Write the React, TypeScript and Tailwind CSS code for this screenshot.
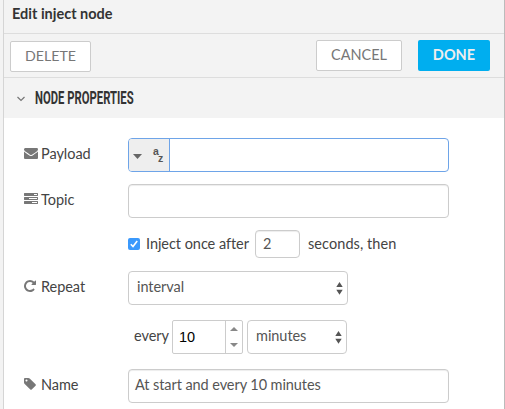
import type { ReactNode } from "react";

const ICONS = {
  envelope:
    "M1792 710v794q0 66-47 113t-113 47h-1472q-66 0-113-47t-47-113v-794q44 49 101 87 362 246 497 345 57 42 92.500 65.500t94.500 48 110 24.500h2q51 0 110-24.500t94.500-48 92.500-65.500q170-123 498-345 57-39 100-87zm0-294q0 79-49 151t-122 123q-376 261-468 325-10 7-42.500 31t-54 38.500-52 32.500-57.500 27-50 9h-2q-23 0-50-9t-57.500-27-52-32.500-54-38.500-42.500-31q-91-64-262-182.500t-205-142.500q-62-42-117-115.500t-55-136.500q0-78 41.500-130t118.500-52h1472q65 0 112.500 47t47.500 113z",
  tasks:
    "M1024 1408h640v-128h-640v128zm-384-512h1024v-128h-1024v128zm640-512h384v-128h-384v128zm512 832v256q0 26-19 45t-45 19h-1664q-26 0-45-19t-19-45v-256q0-26 19-45t45-19h1664q26 0 45 19t19 45zm0-512v256q0 26-19 45t-45 19h-1664q-26 0-45-19t-19-45v-256q0-26 19-45t45-19h1664q26 0 45 19t19 45zm0-512v256q0 26-19 45t-45 19h-1664q-26 0-45-19t-19-45v-256q0-26 19-45t45-19h1664q26 0 45 19t19 45z",
  repeat:
    "M1664 256v448q0 26-19 45t-45 19h-448q-42 0-59-40-17-39 14-69l138-138q-148-137-349-137-104 0-198.500 40.500t-163.500 109.500-109.500 163.500-40.500 198.500 40.500 198.500 109.500 163.500 163.500 109.500 198.500 40.500q119 0 225-52t179-147q7-10 23-12 15 0 25 9l137 138q9 8 9.500 20.500t-7.500 22.500q-109 132-264 204.500t-327 72.500q-156 0-298-61t-245-164-164-245-61-298 61-298 164-245 245-164 298-61q147 0 284.500 55.500t244.500 156.500l130-129q29-31 70-14 39 17 39 59z",
  tag: "M576 448q0-53-37.500-90.500t-90.500-37.500-90.500 37.500-37.500 90.500 37.500 90.500 90.500 37.500 90.500-37.500 37.500-90.500zm1067 576q0 53-37 90l-491 492q-39 37-91 37-53 0-90-37l-715-716q-38-37-64.500-101t-26.500-117v-416q0-52 38-90t90-38h416q53 0 117 26.500t102 64.500l715 714q37 39 37 91z",
};

function Label({ icon, box = "0 0 1792 1792", children }: { icon: keyof typeof ICONS; box?: string; children: ReactNode }) {
  return (
    <div className="flex w-[104px] shrink-0 items-center gap-[3px] pb-[3px]">
      <svg className="mb-px size-[14px] shrink-0 fill-[#777]" viewBox={box}>
        <path d={ICONS[icon]} />
      </svg>
      <span>{children}</span>
    </div>
  );
}

function Arrows() {
  return (
    <svg className="h-[13px] w-[7px] shrink-0 fill-[#555]" viewBox="0 0 7 13">
      <path d="M3.5 0 6.7 5H.3zM3.5 12.700 6.700 7.700H.3z" />
    </svg>
  );
}

export default function App() {
  return (
    <div className="flex h-[409px] w-[505px] overflow-hidden bg-[#f3f3f3] font-['Lato','Liberation_Sans',sans-serif] text-[14.500px] leading-[20px] tracking-[-0.050px] text-[#444]">
      <div className="w-[4px] shrink-0 border-r border-[#d5d5d5]" />
      <div className="flex w-[501px] flex-col border-r border-[#bbb] bg-white">
        <header className="h-[34px] shrink-0 border-b border-[#ddd] bg-[#f3f3f3] pt-[4px] pl-[8px] font-bold tracking-normal text-[#333]">
          Edit inject node
        </header>
        <div className="flex h-[44px] shrink-0 items-start border-b border-[#ddd] bg-[#f3f3f3] pt-[6px] pr-[14px] pl-[6px] tracking-normal">
          <button className="mt-px h-[31px] w-[81px] rounded-[2px] border border-[#ccc] bg-white pb-px text-[14.200px] text-[#777]">DELETE</button>
          <button className="ml-auto h-[31px] w-[86px] rounded-[2px] border border-[#ccc] bg-white pb-px text-[14.500px] text-[#777]">CANCEL</button>
          <button className="ml-[16px] h-[31px] w-[72px] rounded-[2px] bg-[#00aeef] pb-px text-[14.500px] font-bold text-[#eee]">DONE</button>
        </div>
        <div className="flex h-[40px] shrink-0 items-center bg-[#f3f3f3] pl-[13px]">
          <svg className="mt-px h-[6px] w-[8px] fill-none stroke-[#777]" viewBox="0 0 8 6">
            <path d="M.5 1 4 4.500 7.500 1" strokeWidth="1.200" />
          </svg>
          <span className="ml-[10px] inline-block origin-left scale-x-[0.645] pb-px font-['Roboto',sans-serif] text-[17.500px] font-bold tracking-normal whitespace-nowrap text-[#333]">NODE PROPERTIES</span>
        </div>
        <form className="flex flex-col pt-[20px] pl-[20px] whitespace-nowrap">
          <div className="flex h-[34px] items-center">
            <Label icon="envelope">Payload</Label>
            <div className="flex h-[34px] w-[321px] overflow-hidden rounded-[4px] border border-[#6ea4e8] bg-white">
              <div className="flex w-[41px] items-center border-r border-[#6ea4e8] bg-[#eee] pl-[4px]">
                <svg className="mt-[3px] h-[5px] w-[9px] fill-[#666]" viewBox="0 0 9 5">
                  <path d="M0 0h9L4.500 5z" />
                </svg>
                <span className="ml-[11px] flex flex-col pb-px font-['Liberation_Sans',sans-serif] text-[10.500px] leading-[7px] font-bold text-[#555]">
                  <span>a</span>
                  <span className="pl-[5px]">z</span>
                </span>
              </div>
            </div>
          </div>
          <div className="mt-[12px] flex h-[34px] items-center">
            <Label icon="tasks">Topic</Label>
            <div className="h-[34px] w-[321px] rounded-[4px] border border-[#ccc] shadow-[inset_0_1px_1px_rgba(0,0,0,0.075)]" />
          </div>
          <div className="mt-[12px] flex h-[28px] items-center pl-[104px]">
            <span className="flex size-[12px] items-center justify-center rounded-[2px] bg-[#3b99fc]">
              <svg className="size-[10px] fill-none stroke-white" viewBox="0 0 10 10">
                <path d="M1.800 5.200 4 7.500 8.200 2" strokeWidth="1.600" />
              </svg>
            </span>
            <span className="ml-[6px] w-[109px] pb-px">Inject once after</span>
            <div className="h-[28px] w-[45px] rounded-[4px] border border-[#ccc] pt-[3px] pl-[7px] text-[#555] shadow-[inset_0_1px_1px_rgba(0,0,0,0.075)]">2</div>
            <span className="ml-[8px] pb-px tracking-[0.070px]">seconds, then</span>
          </div>
          <div className="mt-[13px] flex h-[34px] items-center">
            <Label icon="repeat" box="128 0 1792 1792">Repeat</Label>
            <div className="flex h-[34px] w-[220px] items-center justify-between rounded-[4px] border border-[#ccc] pr-[4px] pl-[8px] text-[#555]">
              <span className="pb-[2px]">interval</span>
              <Arrows />
            </div>
          </div>
          <div className="mt-[15px] flex h-[34px] items-center pl-[110px]">
            <span className="w-[38px] pb-[3px]">every</span>
            <div className="flex h-[34px] w-[71px] rounded-[2px] border border-[#ccc]">
              <span className="w-[53px] border-r border-[#ccc] pt-[6px] pl-[6px] font-['Liberation_Sans',sans-serif] text-[14.500px] text-black">10</span>
              <span className="flex flex-1 flex-col items-center justify-between pt-[6px] pb-[6px]">
                <svg className="h-[4px] w-[8px] fill-[#888]" viewBox="0 0 8 4"><path d="M0 4h8L4 0z" /></svg>
                <svg className="h-[4px] w-[8px] fill-[#888]" viewBox="0 0 8 4"><path d="M0 0h8L4 4z" /></svg>
              </span>
            </div>
            <div className="ml-[4px] flex h-[34px] w-[100px] items-center justify-between rounded-[4px] border border-[#ccc] pr-[4px] pl-[8px] text-[#555]">
              <span className="pb-[2px]">minutes</span>
              <Arrows />
            </div>
          </div>
          <div className="mt-[15px] flex h-[34px] items-center">
            <Label icon="tag" box="128 0 1792 1792">Name</Label>
            <div className="h-[34px] w-[321px] rounded-[4px] border border-[#ccc] pt-[5px] pl-[6px] tracking-[-0.080px] text-[#555] shadow-[inset_0_1px_1px_rgba(0,0,0,0.075)]">At start and every 10 minutes</div>
          </div>
        </form>
      </div>
    </div>
  );
}
